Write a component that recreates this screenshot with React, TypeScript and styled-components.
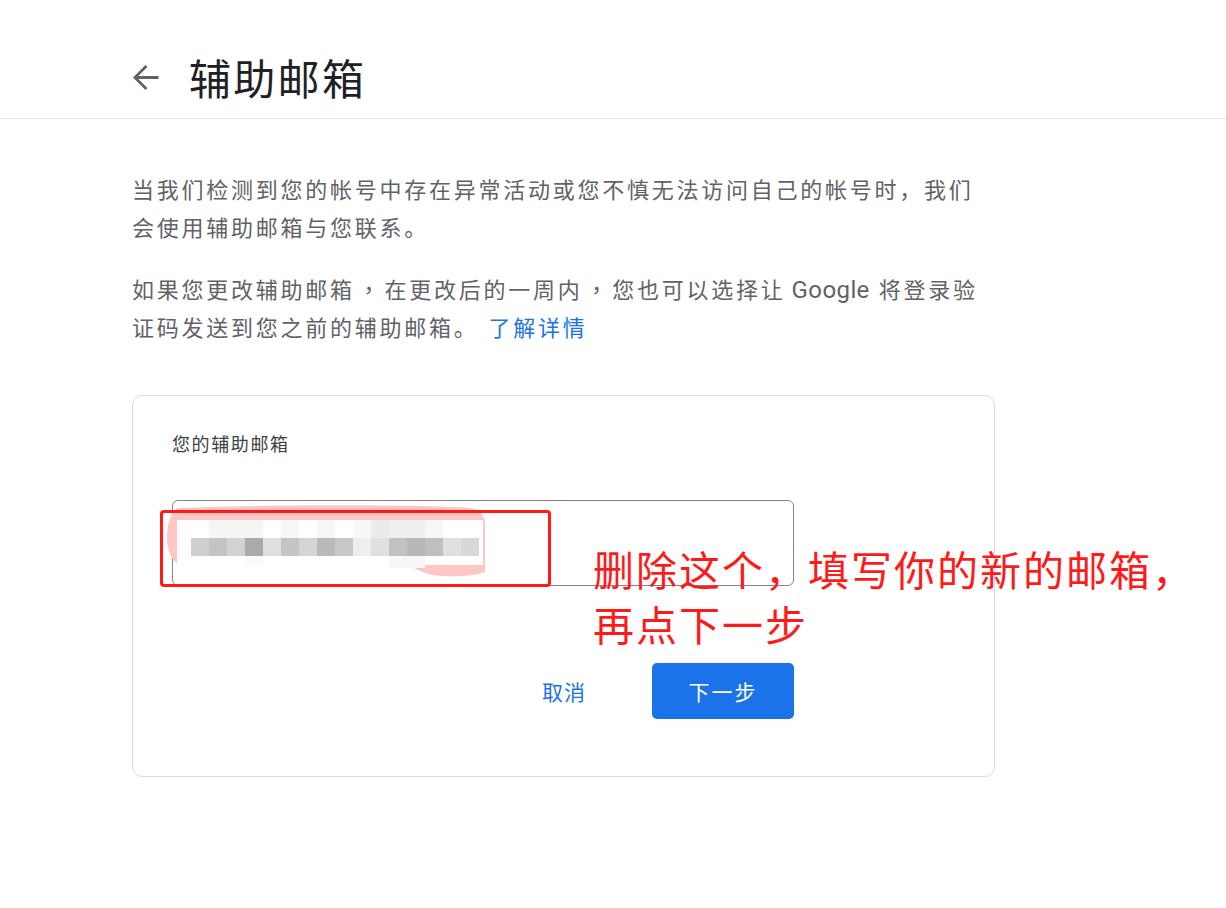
import React from "react";
import styled, { createGlobalStyle } from "styled-components";

const GlobalStyle = createGlobalStyle`
  html, body {
    margin: 0;
    padding: 0;
    background: #ffffff;
  }
  body {
    font-family: Roboto, "Noto Sans CJK SC", "Noto Sans", sans-serif;
    color: #202124;
  }
  * { box-sizing: border-box; }
`;

const Page = styled.div`
  width: 1226px;
  min-height: 908px;
  background: #fff;
`;

const Header = styled.header`
  height: 119px;
  border-bottom: 1px solid #e6e7e9;
  display: flex;
  align-items: center;
  padding: 36px 0 0 125px;
`;

const BackButton = styled.button`
  width: 40px;
  height: 40px;
  padding: 0;
  border: none;
  background: transparent;
  display: flex;
  align-items: center;
  justify-content: center;
  color: #5f6368;
  cursor: pointer;
`;

const Title = styled.h1`
  margin: 0 0 0 24px;
  font-family: "Noto Sans CJK SC", sans-serif;
  font-weight: 400;
  font-size: 42px;
  letter-spacing: 2.3px;
  line-height: 56px;
  color: #202124;
`;

const Main = styled.main`
  padding: 50px 0 0 132px;
  width: 1000px;
`;

const Paragraph = styled.p<{ $gap?: number }>`
  margin: ${(p) => p.$gap ?? 0}px 0 0;
  font-family: "Noto Sans CJK SC", sans-serif;
  font-size: 22px;
  letter-spacing: 2.75px;
  line-height: 38px;
  color: #5f6368;
  white-space: nowrap;
`;

const Latin = styled.span`
  font-family: Roboto, sans-serif;
  font-size: 24px;
  line-height: 1;
  letter-spacing: 0.4px;
  margin: 0 9px 0 6px;
`;

const Punct = styled.span`
  font-family: "Noto Sans CJK TC", sans-serif;
  line-height: 1;
  margin: 0 2px 0 3px;
`;

const Link = styled.a`
  color: #1a73e8;
  text-decoration: none;
  margin-left: 10px;
`;

const Card = styled.section`
  position: relative;
  margin-top: 50px;
  width: 863px;
  border: 1px solid #dadce0;
  border-radius: 10px;
  padding: 35px 200px 57px 39px;
`;

const FieldLabel = styled.div`
  font-family: "Noto Sans CJK SC", sans-serif;
  font-size: 18px;
  letter-spacing: 1.6px;
  line-height: 24px;
  color: #3c4043;
`;

const InputBox = styled.div`
  position: relative;
  margin-top: 45px;
  height: 86px;
  border: 1px solid #80868b;
  border-radius: 6px;
`;

const Redaction = styled.svg`
  position: absolute;
  left: -1px;
  top: -1px;
  overflow: visible;
`;

const Highlight = styled.div`
  position: absolute;
  left: 27px;
  top: 114px;
  width: 391px;
  height: 77px;
  border: 3px solid #ff1a1a;
  border-radius: 4px;
  pointer-events: none;
`;

const Annotation = styled.div`
  position: absolute;
  left: 460px;
  top: 145px;
  font-family: "Noto Sans CJK SC", sans-serif;
  font-size: 41px;
  line-height: 55px;
  letter-spacing: 2px;
  color: #ff1a1a;
  white-space: nowrap;
  pointer-events: none;
`;

const Actions = styled.div`
  margin-top: 77px;
  display: flex;
  justify-content: flex-end;
  align-items: center;
  gap: 42px;
`;

const TextButton = styled.button`
  border: none;
  background: transparent;
  padding: 0 24px;
  height: 56px;
  font-family: "Noto Sans CJK SC", sans-serif;
  font-size: 21px;
  letter-spacing: 1px;
  color: #1a73e8;
  cursor: pointer;
`;

const PrimaryButton = styled.button`
  border: none;
  width: 142px;
  height: 56px;
  border-radius: 5px;
  background: #1a73e8;
  color: #fff;
  font-family: "Noto Sans CJK SC", sans-serif;
  font-size: 21px;
  letter-spacing: 2px;
  cursor: pointer;
`;

const row2 = [
  "#cfcfcf", "#c4c4c4", "#d2d2d2", "#aaaaaa", "#e0e0e0", "#c5c5c5", "#d5d5d5", "#bababa",
  "#c8c8c8", "#eeeeee", "#e0e0e0", "#c2c2c2", "#b8b8b8", "#bfbfbf", "#e0e0e0", "#d8d8d8",
];
const row1 = [
  "#ffffff", "#f5f5f5", "#f5f5f5", "#f5f5f5", "#ffffff", "#f7f7f7", "#ffffff", "#f7f7f7",
  "#ffffff", "#f8f8f8", "#ebebeb", "#eeeeee", "#efefef", "#f7f7f7", "#ffffff", "#ffffff",
];

function ArrowBack() {
  return (
    <svg width="39" height="39" viewBox="0 0 24 24" fill="currentColor" aria-hidden>
      <path d="M20 11.1H7.6l5.6-5.6L12 4.3 4.3 12l7.7 7.7 1.2-1.2-5.6-5.6H20v-1.8z" />
    </svg>
  );
}

function MaskedValue() {
  return (
    <Redaction width="622" height="86" viewBox="0 0 622 86">
      <path
        d="M6 8 C 70 5, 240 4, 298 8 C 308 10, 313 16, 313 24 L 313 72 C 300 77, 275 77, 260 75 C 248 72, 240 66, 232 64 L 6 64 C -4 58, -7 40, -4 26 C -2 16, 1 10, 6 8 Z"
        fill="#ffc6c6"
      />
      <rect x={5} y={20} width={306} height={45} fill="#ffffff" />
      {row1.map((c, i) => (
        <rect key={"a" + i} x={19 + i * 18} y={20} width={18} height={18} fill={c} />
      ))}
      {row2.map((c, i) => (
        <rect key={"b" + i} x={19 + i * 18} y={38} width={18} height={18} fill={c} />
      ))}
      <rect x={73} y={56} width={18} height={10} fill="#fafafa" />
      <rect x={217} y={56} width={36} height={12} fill="#f8f8f8" />
    </Redaction>
  );
}

export default function App() {
  return (
    <Page>
      <GlobalStyle />
      <Header>
        <BackButton aria-label="返回">
          <ArrowBack />
        </BackButton>
        <Title>辅助邮箱</Title>
      </Header>
      <Main>
        <Paragraph>
          当我们检测到您的帐号中存在异常活动或您不慎无法访问自己的帐号时，我们
          <br />
          会使用辅助邮箱与您联系。
        </Paragraph>
        <Paragraph $gap={24}>
          如果您更改辅助邮箱<Punct>，</Punct>在更改后的一周内<Punct>，</Punct>您也可以选择让
          <Latin>Google</Latin>将登录验
          <br />
          证码发送到您之前的辅助邮箱。
          <Link href="#">了解详情</Link>
        </Paragraph>
        <Card>
          <FieldLabel>您的辅助邮箱</FieldLabel>
          <InputBox>
            <MaskedValue />
          </InputBox>
          <Actions>
            <TextButton>取消</TextButton>
            <PrimaryButton>下一步</PrimaryButton>
          </Actions>
          <Highlight />
          <Annotation>
            删除这个，填写你的新的邮箱，
            <br />
            再点下一步
          </Annotation>
        </Card>
      </Main>
    </Page>
  );
}
